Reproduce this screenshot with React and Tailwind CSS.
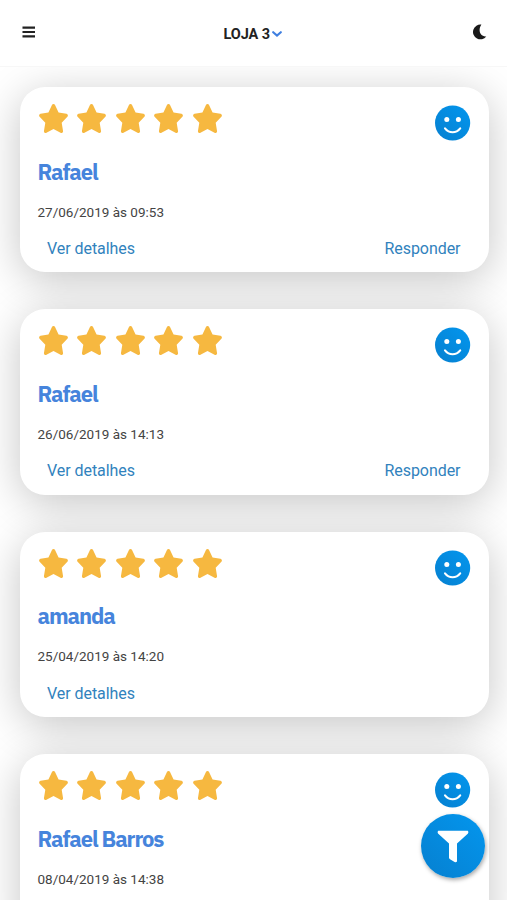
import { useState } from 'react';
import { FaStar } from 'react-icons/fa';

const reviews = [
    { id: 1, name: 'Rafael', date: '27/06/2019 às 09:53', stars: 5, actions: ['Ver detalhes', 'Responder'] },
    { id: 2, name: 'Rafael', date: '26/06/2019 às 14:13', stars: 5, actions: ['Ver detalhes', 'Responder'] },
    { id: 3, name: 'amanda', date: '25/04/2019 às 14:20', stars: 5, actions: ['Ver detalhes'] },
    { id: 4, name: 'Rafael Barros', date: '08/04/2019 às 14:38', stars: 5, actions: [] },
];

function SmileIcon() {
    return (
        <svg viewBox="0 0 36 36" className="w-9 h-9 mt-px -mb-px">
            <defs>
                <linearGradient id="smile" x1="0" y1="1" x2="1" y2="0">
                    <stop offset="0" stopColor="#0680d0" />
                    <stop offset="1" stopColor="#0396ee" />
                </linearGradient>
            </defs>
            <circle cx="17.6" cy="18" r="17.6" fill="url(#smile)" />
            <circle cx="11.8" cy="14.4" r="2.5" fill="white" />
            <circle cx="23.4" cy="14.4" r="2.5" fill="white" />
            <path d="M10 23.4c4.2 5.2 11 5.2 15.2 0" fill="none" stroke="white" strokeWidth="2.1" strokeLinecap="round" />
        </svg>
    );
}

function ReviewCard({ review }) {
    return (
        <div className="h-[185.4px] shrink-0 rounded-[25px] bg-white px-[18px] pt-[17px] shadow-[0_8px_44px_rgba(0,0,0,0.23)]">
            <div className="flex justify-between">
                <div className="flex gap-[7.6px]">
                    {Array.from({ length: review.stars }).map((_, index) => (
                        <FaStar key={index} preserveAspectRatio="none" className="w-[31px] h-[29px] text-[#f6b840]" />
                    ))}
                </div>
                <SmileIcon />
            </div>
            <h2 className="mt-[13.5px] font-['IBM_Plex_Sans','Noto_Sans',sans-serif] text-[22px] leading-9 font-bold tracking-[-1.1px] text-[#4684dc]">
                {review.name}
            </h2>
            <p className="mt-3 text-[13.5px] leading-5 text-[#444]">{review.date}</p>
            <div className="mt-[15.5px] flex justify-between pl-[9.5px] pr-[10px] text-[16px] leading-6 tracking-[-0.05px] text-[#3182bd]">
                {review.actions.map(action => (
                    <button key={action}>{action}</button>
                ))}
            </div>
        </div>
    );
}

export default function App() {
    const [dark, setDark] = useState(false);

    return (
        <div className="relative flex h-[900px] flex-col overflow-hidden bg-white font-[Roboto,sans-serif]">
            <header className="flex h-[66px] shrink-0 items-center justify-between bg-white pl-[21.5px] pr-[20.5px]">
                <button className="w-[15px]">
                    <svg viewBox="0 0 14 12" className="w-[13.5px] h-3 mb-[2px]">
                        <path d="M.5 1.5h13M.5 6h13M.5 10.5h13" stroke="#222" strokeWidth="2.3" />
                    </svg>
                </button>
                <button className="mt-[3px] mr-[2px] flex items-center gap-[2.5px] text-[14.5px] font-bold tracking-[-0.1px] text-[#222]">
                    LOJA 3
                    <svg viewBox="0 0 10 6" className="w-[10px] h-[6px] mb-[2px]">
                        <path d="M1.2 1.2 5 4.6 8.8 1.2" fill="none" stroke="#3f7fe0" strokeWidth="2.1" strokeLinecap="round" />
                    </svg>
                </button>
                <button onClick={() => setDark(!dark)}>
                    <svg viewBox="0 0 15 16" className="w-[15px] h-[16px] mb-[2px]">
                        <path d="M9.4.6A7.4 7.4 0 1 0 14.3 12.4C8.5 13.2 5.4 6.5 9.4.6Z" fill="#191919" />
                    </svg>
                </button>
            </header>

            <main className="flex flex-1 flex-col gap-[37px] overflow-hidden border-t border-[#f7f7f7] pl-[19.5px] pr-[18.5px] pt-5">
                {reviews.map(review => (
                    <ReviewCard key={review.id} review={review} />
                ))}
            </main>

            {/* Floating filter button */}
            <button className="absolute right-[22px] bottom-[22px] flex h-16 w-16 items-center justify-center rounded-full bg-linear-to-tr from-[#0680d0] to-[#0396ee] shadow-[1px_2px_4px_rgba(0,0,0,0.35)]">
                <svg viewBox="0 0 32 33" className="w-8 h-[33px]">
                    <path d="M1.2.8h29.6q1.2 1 .2 2.6L20 13.5v18q-1 1.3-2.4.5l-4.6-2.8q-1-.7-1-1.7v-14L1 3.4q-1-1.6.2-2.6Z" fill="white" />
                </svg>
            </button>
        </div>
    );
}
